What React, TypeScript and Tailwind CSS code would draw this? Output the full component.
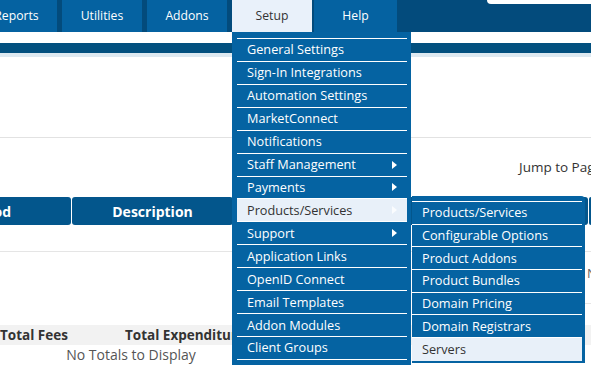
import React from 'react';

const mainItems = [
  { label: 'General Settings' },
  { label: 'Sign-In Integrations' },
  { label: 'Automation Settings' },
  { label: 'MarketConnect' },
  { label: 'Notifications' },
  { label: 'Staff Management', sub: true },
  { label: 'Payments', sub: true },
  { label: 'Products/Services', sub: true, active: true },
  { label: 'Support', sub: true },
  { label: 'Application Links' },
  { label: 'OpenID Connect' },
  { label: 'Email Templates' },
  { label: 'Addon Modules' },
  { label: 'Client Groups' },
  { label: 'Custom Client Fields' },
];

const subItems = [
  'Products/Services',
  'Configurable Options',
  'Product Addons',
  'Product Bundles',
  'Domain Pricing',
  'Domain Registrars',
  'Servers',
];

function Arrow({ light }: { light?: boolean }) {
  return (
    <span
      className={
        light
          ? 'h-0 w-0 border-y-[4px] border-l-[5px] border-y-transparent border-l-white/80'
          : 'h-0 w-0 border-y-[4px] border-l-[5px] border-y-transparent border-l-white'
      }
    />
  );
}

export default function App() {
  return (
    <div className="relative h-[365px] w-[591px] overflow-hidden bg-white font-['Open_Sans',sans-serif] text-[13px] text-[#333]">
      {/* top nav */}
      <nav className="flex h-[32px] bg-[#034b7c] text-[12.2px] text-white">
        <div className="ml-[-24px] flex w-[81px] items-center justify-center bg-[#0562a1]">Reports</div>
        <div className="ml-[5px] flex w-[80px] items-center justify-center bg-[#0562a1]">Utilities</div>
        <div className="ml-[5px] flex w-[80px] items-center justify-center bg-[#0562a1]">Addons</div>
        <div className="ml-[5px] flex w-[80px] items-center justify-center bg-[#e9f1fa] text-[#333]">Setup</div>
        <div className="ml-[2px] flex w-[83px] items-center justify-center bg-[#0562a1]">Help</div>
        <div className="ml-auto h-[4px] w-[104px] rounded-bl-[7px] bg-white" />
      </nav>
      <div className="h-[11px]" />
      <div className="h-[10px] bg-[#02507f]" />
      <div className="h-[4px] bg-[#dde9f1]" />
      <div className="h-[81px] border-b border-[#e2e2e2]" />

      <div className="flex h-[59px] items-center whitespace-nowrap pl-[519px] text-[13.5px]">Jump to Page:</div>

      {/* table header */}
      <div className="flex h-[28px] gap-[1px] text-[14px] font-bold text-white">
        <div className="flex w-[71px] items-center justify-end rounded-r-[3px] bg-[#03568c] pr-[60px] whitespace-nowrap">
          Method
        </div>
        <div className="flex w-[161px] items-center justify-center rounded-[3px] bg-[#03568c]">Description</div>
        <div className="w-[354px] rounded-[3px] bg-[#03568c]" />
        <div className="flex-1 rounded-l-[3px] bg-[#03568c]" />
      </div>
      <div className="h-[27px] border-b border-[#e5e5e5]" />
      <div className="flex h-[52px] justify-end">
        <div className="flex w-[8px] items-center overflow-hidden border-b border-[#e5e5e5] pb-[8px] pl-[4px] whitespace-nowrap text-[#666]">
          No Data
        </div>
      </div>
      <div className="h-[21px]" />
      <div className="flex h-[20px] items-center whitespace-nowrap bg-[#f2f2f2] text-[13.5px] font-bold">
        <span className="w-[125px]">Total Fees</span>
        <span>Total Expenditure</span>
      </div>
      <div className="flex h-[18px] w-[262px] items-center justify-center whitespace-nowrap text-[14px] text-[#555]">
        No Totals to Display
      </div>

      {/* Setup dropdown */}
      <div className="absolute left-[232px] top-[32px] h-[340px] w-[179px] bg-[#0563a2] pl-[5px] pr-[4px] pt-[6px] text-[12.7px] text-white">
        <ul className="border-t border-white">
          {mainItems.map((item) => (
            <li
              key={item.label}
              className={
                item.active
                  ? 'flex h-[22.93px] items-center justify-between border-b border-white bg-[#e8f0f9] pl-[10px] pr-[10px] text-[#333]'
                  : 'flex h-[22.93px] items-center justify-between border-b border-white pl-[10px] pr-[10px]'
              }
            >
              <span className="whitespace-nowrap">{item.label}</span>
              {item.sub && <Arrow light={item.active} />}
            </li>
          ))}
        </ul>

        <div className="absolute left-[180px] top-[164px] w-[173px] rounded-tr-[4px] bg-[#0563a2] pb-[2px] pr-[3px] pt-[5px]">
          <ul className="border-t border-white">
            {subItems.map((label) => (
              <li
                key={label}
                className={
                  label === 'Servers'
                    ? 'flex h-[22.7px] items-center bg-[#e8f0f9] pl-[10px] text-[#333]'
                    : 'flex h-[22.7px] items-center border-b border-white pl-[10px]'
                }
              >
                {label}
              </li>
            ))}
          </ul>
        </div>
      </div>
    </div>
  );
}
